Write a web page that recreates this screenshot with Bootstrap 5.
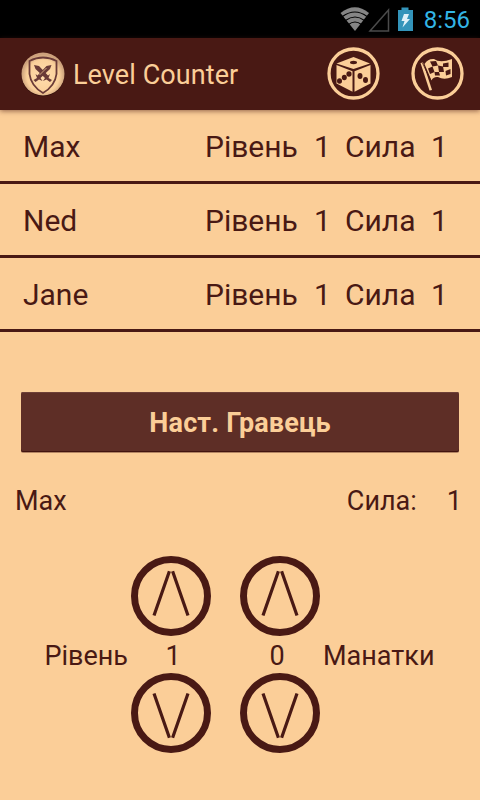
<!DOCTYPE html>
<html lang="uk">
<head>
<meta charset="utf-8">
<meta name="viewport" content="width=device-width, initial-scale=1">
<title>Level Counter</title>
<link href="https://cdn.jsdelivr.net/npm/bootstrap@5.3.0/dist/css/bootstrap.min.css" rel="stylesheet">
<style>
:root{--peach:#fbce98;--maroon:#491914}
body{width:480px;height:800px;overflow:hidden;background:var(--peach);color:var(--maroon);font-family:Roboto,"Liberation Sans",sans-serif;font-size:27px;line-height:32px}
svg{display:block;flex:none}
.statusbar{height:38px;background:#000;color:#33b5e5;font-size:24px;padding:2px 10px 0 0}
.clock{margin-left:10px}
.appbar{height:72px;background:var(--maroon);color:var(--peach);padding:0 16px 0 21px;box-shadow:0 1px 5px rgba(73,25,20,.6)}
.app-title{padding-top:2px;letter-spacing:.08px}
.flag-icon{margin-left:30px}
.player{height:74px;border-bottom:3px solid var(--maroon);font-size:30px;padding:2px 0 0 23px}
.w-name{width:182px}.w-level{width:109px}.w-num{width:31px}.w-power{width:86px}
.next-btn,.next-btn:hover{height:60px;margin:60px 21px 0;padding:2px 0 0;border:0;border-radius:2px;background:#5e2e26;color:var(--peach);font-size:27px;font-weight:700;letter-spacing:.15px;box-shadow:inset 0 -1px #42140f,inset 0 1px #6e4037,0 1px rgba(73,25,20,.4)}
.current{margin-top:33px;padding:0 18px 0 15px}
.power-label{margin-right:30px}
.counter{margin-top:39px}
.round{width:80px;height:80px;border:0;padding:0;background:none}
.rounds{gap:29px;padding-left:131px}
.values{height:37px;padding-top:3px}
.side{width:128px}
.level-value{width:90px}
.gear-value{width:118px}
.gear-label{margin-left:-13px}
</style>
</head>
<body>
<svg width="0" height="0" class="position-absolute"><defs>
<g id="up" fill="none" stroke="#491914"><circle cx="40" cy="40" r="36.500" stroke-width="7"/><path d="M23 59.500 38.400 15.200M41.600 15.200 57 59.500" stroke-width="3.200"/></g>
</defs></svg>
<div class="statusbar d-flex justify-content-end align-items-center">
<svg width="74" height="34" viewBox="0 0 74 34"><path d="M0.500 10Q15-1.500 29 10L15 28Z" fill="#858585"/><path d="M2.500 13.500Q15 4.500 27 13.500M5.500 17.500Q15 10.500 24.500 17.500M8.500 21.500Q15 16.500 21.500 21.500" fill="none" stroke="#000" stroke-width="1.200"/><path d="M30 28H48.500V7Z" fill="none" stroke="#4b4b4b" stroke-width="1.500"/><path d="M58 7h3.500V4.500h7V7H73V28H58Z" fill="#3394ba"/><path d="M64 11h5l-2 5h3l-7.500 8.500L64.500 18H61.500Z" fill="#dff1f8"/></svg>
<span class="clock">8:56</span>
</div>
<nav class="appbar d-flex align-items-center position-relative">
<svg width="44" height="46" viewBox="0 0 44 46"><defs><radialGradient id="coin" cx=".5" cy=".55"><stop offset="0" stop-color="#ffdcac"/><stop offset=".75" stop-color="#fad09b"/><stop offset="1" stop-color="#cda17c"/></radialGradient></defs><circle cx="22" cy="23.700" r="21.500" fill="#2e0c08"/><circle cx="22" cy="23" r="21.500" fill="url(#coin)"/><path d="M22 6.500Q29 6.500 35.500 10V23Q34 35 22 42Q10 35 8.500 23V10Q15 6.500 22 6.500Z" fill="none" stroke="#6a3b38" stroke-width="1.800"/><g fill="#6a3b38"><path id="sword" d="M13 14 18 15 27 24.500 29 23 27.500 27 31 29 29 31 25.500 28.500 22 30 24 27 14.500 18Z"/><use href="#sword" transform="matrix(-1 0 0 1 43.500 0)"/></g><path d="M18.500 24 25.500 17" stroke="#fbce98" stroke-width=".7"/></svg>
<span class="app-title ms-2">Level Counter</span>
<svg class="ms-auto" width="54" height="54" viewBox="0 0 54 54"><circle cx="27.500" cy="26.500" r="24.500" fill="none" stroke="#fbce98" stroke-width="3.300"/><g fill="#fbce98"><path d="M10.500 16.500 27.500 10 44 16.500 27.500 22Z"/><path d="M10.500 18 26.500 24.200V44.700L10.500 36.500Z"/><path d="M28.500 24.200 44.500 18V36.500L28.500 44.700Z"/></g><g fill="#491914"><ellipse cx="27.500" cy="15.500" rx="3.500" ry="1.700"/><ellipse cx="23" cy="27" rx="2.600" ry="2.800"/><ellipse cx="18.300" cy="30.500" rx="2.500" ry="2.800"/><ellipse cx="13.500" cy="34" rx="2.500" ry="2.800"/><ellipse cx="34" cy="29" rx="2.500" ry="3"/><ellipse cx="39.500" cy="33" rx="2.500" ry="3"/></g></svg>
<svg class="flag-icon" width="54" height="54" viewBox="0 0 54 54"><circle cx="27.500" cy="26.500" r="24.500" fill="none" stroke="#fbce98" stroke-width="3.300"/><path d="M10.500 16 13 15.500 22 43 19.500 43.500Z" fill="#fbce98"/><path d="M14.500 17Q18 11.500 24 12Q30 16.500 42 12V30Q34 33.500 28 30Q23 29.500 21.500 33.500Z" fill="#fbce98"/><g fill="#491914"><path d="M20 14.500 26 14 28 18.500 22.500 19.500ZM28 18.500 33 19.500 34 25 29 25ZM18 21.500 22.500 19.500 24.500 25 20 27ZM24.500 25 29 25 30 28.500 25 28.500ZM33 16.500 38.500 15.500V20L33 20ZM35.500 24 40.500 22V27L36 28.500Z"/></g><path d="M12.500 16 21 34" stroke="#491914" stroke-width=".8"/></svg>
</nav>
<main>
<div class="player d-flex align-items-center"><span class="w-name">Max</span><span class="w-level">Рівень</span><span class="w-num">1</span><span class="w-power">Сила</span><span>1</span></div>
<div class="player d-flex align-items-center"><span class="w-name">Ned</span><span class="w-level">Рівень</span><span class="w-num">1</span><span class="w-power">Сила</span><span>1</span></div>
<div class="player d-flex align-items-center"><span class="w-name">Jane</span><span class="w-level">Рівень</span><span class="w-num">1</span><span class="w-power">Сила</span><span>1</span></div>
<div class="d-grid"><button class="btn next-btn">Наст. Гравець</button></div>
<div class="current d-flex"><span class="me-auto">Max</span><span class="power-label">Сила:</span><span>1</span></div>
<section class="counter">
<div class="rounds d-flex"><button class="round"><svg width="80" height="80"><use href="#up"/></svg></button><button class="round"><svg width="80" height="80"><use href="#up"/></svg></button></div>
<div class="values d-flex align-items-center"><span class="side text-end">Рівень</span><span class="level-value text-center">1</span><span class="gear-value text-center">0</span><span class="gear-label">Манатки</span></div>
<div class="rounds d-flex"><button class="round"><svg width="80" height="80"><use href="#up" transform="matrix(1 0 0 -1 0 80)"/></svg></button><button class="round"><svg width="80" height="80"><use href="#up" transform="matrix(1 0 0 -1 0 80)"/></svg></button></div>
</section>
</main>
<script src="https://cdn.jsdelivr.net/npm/bootstrap@5.3.0/dist/js/bootstrap.bundle.min.js"></script>
</body>
</html>
